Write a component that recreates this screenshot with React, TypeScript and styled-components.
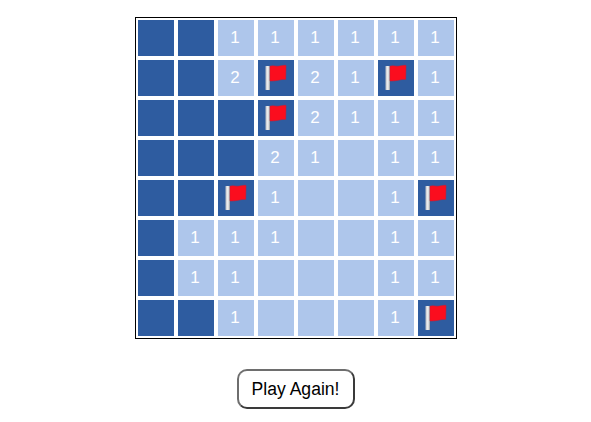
import React from "react";
import styled, { createGlobalStyle } from "styled-components";

const GlobalStyle = createGlobalStyle`
  html, body { margin: 0; padding: 0; background: #ffffff; }
  body { font-family: "Liberation Sans", Arial, sans-serif; }
`;

const Page = styled.main`
  display: flex;
  flex-direction: column;
  align-items: center;
  padding-top: 17px;
`;

const Board = styled.div`
  display: grid;
  grid-template-columns: repeat(8, 36px);
  grid-auto-rows: 36px;
  gap: 4px;
  padding: 2px;
  border: 1px solid #000000;
`;

const Cell = styled.div<{ $open: boolean }>`
  display: flex;
  align-items: center;
  justify-content: center;
  padding-right: 1px;
  box-sizing: border-box;
  background: ${(p) => (p.$open ? "#aec6eb" : "#2e5ca0")};
  color: #ffffff;
  font-size: 17px;
  line-height: 18px;
`;

const FlagIcon = styled.svg`
  display: block;
  flex: none;
  margin-right: -1px;
`;

const PlayAgain = styled.button`
  margin-top: 30px;
  width: 118px;
  height: 40px;
  padding: 0;
  background: #ffffff;
  border-style: solid;
  border-width: 2px;
  border-color: #6e6e6e #3a3a3a #3a3a3a #6e6e6e;
  border-radius: 10px;
  color: #000000;
  font-family: "Liberation Sans", Arial, sans-serif;
  font-size: 17.6px;
`;

const Flag = () => (
  <FlagIcon width="36" height="36" viewBox="0 0 36 36" aria-hidden="true">
    <defs>
      <linearGradient id="pole" x1="0" x2="1" y1="0" y2="0">
        <stop offset="0" stopColor="#b9bdc5" />
        <stop offset="0.55" stopColor="#f6f6f6" />
        <stop offset="1" stopColor="#8f939b" />
      </linearGradient>
    </defs>
    <rect x="7.5" y="6" width="4.5" height="24" rx="0.5" fill="url(#pole)" />
    <path
      d="M12 6.2 Q14 5.4 17 6 Q20 6.6 23 5.8 Q26 5 28 5.4 L27.7 19.4 Q24 19.2 20.5 20.2 Q16 21.2 12 21 Z"
      fill="#fb0d1e"
      stroke="#d01a2c"
      strokeWidth="0.5"
    />
  </FlagIcon>
);

const rows = [
  "HH111111",
  "HH2F21F1",
  "HHHF2111",
  "HHH21E11",
  "HHF1EE1F",
  "H111EE11",
  "H11EEE11",
  "HH1EEE1F",
];

export default function App() {
  return (
    <Page>
      <GlobalStyle />
      <Board>
        {rows.flatMap((row, r) =>
          row.split("").map((c, i) => (
            <Cell key={`${r}-${i}`} $open={c !== "H" && c !== "F"}>
              {c === "F" ? <Flag /> : c === "H" || c === "E" ? null : c}
            </Cell>
          ))
        )}
      </Board>
      <PlayAgain>Play Again!</PlayAgain>
    </Page>
  );
}
